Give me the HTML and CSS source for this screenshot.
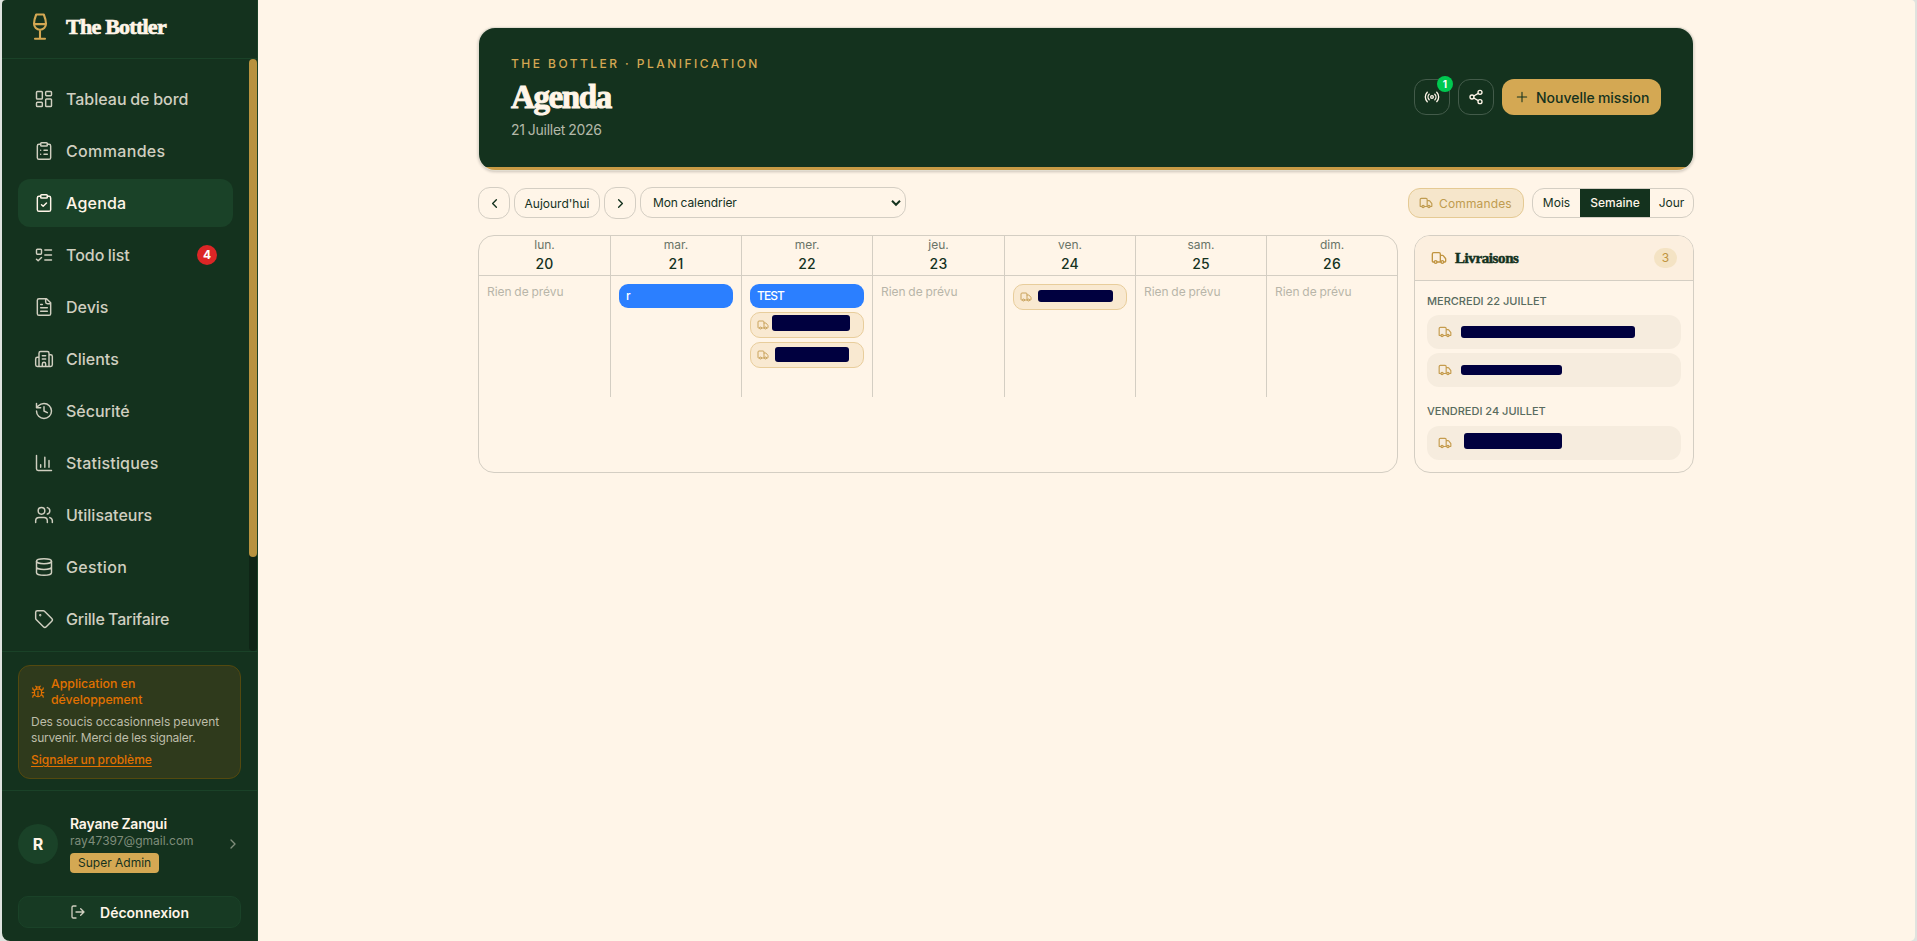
FILE: index.html
```html
<!DOCTYPE html>
<html lang="fr">
<head>
<meta charset="utf-8">
<title>The Bottler - Agenda</title>
<link rel="stylesheet" href="styles.css">
</head>
<body>
<svg class="defs" aria-hidden="true">
  <symbol id="truck" viewBox="0 0 24 24"><path d="M14 18V6a2 2 0 0 0-2-2H4a2 2 0 0 0-2 2v11a1 1 0 0 0 1 1h2M15 18H9M19 18h2a1 1 0 0 0 1-1v-3.65a1 1 0 0 0-.22-.624l-3.48-4.35A1 1 0 0 0 17.52 8H14"/><circle cx="17" cy="18" r="2"/><circle cx="7" cy="18" r="2"/></symbol>
</svg>
<div class="app">
  <aside class="sidebar">
    <div class="brand">
      <svg class="logo" viewBox="0 0 24 36"><path d="M8.2 6h7.600c1.200 3 2.200 6 2.200 9.200a6 6 0 0 1-12 0c0-3.200 1-6.200 2.200-9.200zM6 15.600h12M12 21.200v9M7 30.200h10"/></svg>
      <span class="brand-name">The Bottler</span>
    </div>
    <div class="nav-wrap">
      <nav class="nav">
        <a class="item"><svg viewBox="0 0 24 24"><rect width="7" height="9" x="3" y="3" rx="1"/><rect width="7" height="5" x="14" y="3" rx="1"/><rect width="7" height="9" x="14" y="12" rx="1"/><rect width="7" height="5" x="3" y="16" rx="1"/></svg><span class="t-tableau">Tableau de bord</span></a>
        <a class="item"><svg viewBox="0 0 24 24"><rect width="8" height="4" x="8" y="2" rx="1"/><path d="M16 4h2a2 2 0 0 1 2 2v14a2 2 0 0 1-2 2H6a2 2 0 0 1-2-2V6a2 2 0 0 1 2-2h2M12 11h4M12 16h4M8 11h.01M8 16h.01"/></svg><span class="t-wide">Commandes</span></a>
        <a class="item active"><svg viewBox="0 0 24 24"><rect width="8" height="4" x="8" y="2" rx="1"/><path d="M16 4h2a2 2 0 0 1 2 2v14a2 2 0 0 1-2 2H6a2 2 0 0 1-2-2V6a2 2 0 0 1 2-2h2M9 14l2 2 4-4"/></svg><span class="t-stats">Agenda</span></a>
        <a class="item"><svg viewBox="0 0 24 24"><rect x="3" y="5" width="6" height="6" rx="1"/><path d="m3 17 2 2 4-4M13 6h8M13 12h8M13 18h8"/></svg><span class="t-todo">Todo list</span><b class="count">4</b></a>
        <a class="item"><svg viewBox="0 0 24 24"><path d="M15 2H6a2 2 0 0 0-2 2v16a2 2 0 0 0 2 2h12a2 2 0 0 0 2-2V7ZM14 2v4a2 2 0 0 0 2 2h4M10 9H8M16 13H8M16 17H8"/></svg><span>Devis</span></a>
        <a class="item"><svg viewBox="0 0 24 24"><path d="M10 12h4M10 8h4M14 21v-3a2 2 0 0 0-4 0v3M6 10H4a2 2 0 0 0-2 2v7a2 2 0 0 0 2 2h16a2 2 0 0 0 2-2V9a2 2 0 0 0-2-2h-2M6 21V5a2 2 0 0 1 2-2h8a2 2 0 0 1 2 2v16"/></svg><span>Clients</span></a>
        <a class="item"><svg viewBox="0 0 24 24"><path d="M3 12a9 9 0 1 0 9-9 9.75 9.75 0 0 0-6.74 2.74L3 8M3 3v5h5M12 7v5l4 2"/></svg><span>Sécurité</span></a>
        <a class="item"><svg viewBox="0 0 24 24"><path d="M3 3v16a2 2 0 0 0 2 2h16M13 17V5M18 17V9M8 17v-3"/></svg><span class="t-stats">Statistiques</span></a>
        <a class="item"><svg viewBox="0 0 24 24"><path d="M16 21v-2a4 4 0 0 0-4-4H6a4 4 0 0 0-4 4v2M16 3.128a4 4 0 0 1 0 7.744M22 21v-2a4 4 0 0 0-3-3.87"/><circle cx="9" cy="7" r="4"/></svg><span>Utilisateurs</span></a>
        <a class="item"><svg viewBox="0 0 24 24"><ellipse cx="12" cy="5" rx="9" ry="3"/><path d="M3 5v14a9 3 0 0 0 18 0V5M3 12a9 3 0 0 0 18 0"/></svg><span class="t-wide">Gestion</span></a>
        <a class="item"><svg viewBox="0 0 24 24"><path d="M12.586 2.586A2 2 0 0 0 11.172 2H4a2 2 0 0 0-2 2v7.172a2 2 0 0 0 .586 1.414l8.704 8.704a2.426 2.426 0 0 0 3.42 0l6.58-6.58a2.426 2.426 0 0 0 0-3.42z"/><circle cx="7.5" cy="7.5" r=".5"/></svg><span class="t-grille">Grille Tarifaire</span></a>
      </nav>
      <div class="track"><div class="thumb"></div></div>
    </div>
    <div class="notice-wrap">
      <div class="notice">
        <div class="notice-title"><svg viewBox="0 0 24 24"><path d="m8 2 1.88 1.88M14.12 3.88 16 2M9 7.13v-1a3 3 0 1 1 6 0v1M12 20c-3.3 0-6-2.7-6-6v-3a4 4 0 0 1 4-4h4a4 4 0 0 1 4 4v3c0 3.3-2.7 6-6 6M12 20v-9M6.53 9C4.6 8.8 3 7.1 3 5M6 13H2M3 21c0-2.1 1.7-3.9 3.8-4M20.97 5c0 2.1-1.6 3.8-3.5 4M22 13h-4M17.2 17c2.1.1 3.8 1.9 3.8 4"/></svg><span>Application en<br>développement</span></div>
        <p>Des soucis occasionnels peuvent<br><span class="tight">survenir. Merci de les signaler.</span></p>
        <a>Signaler un problème</a>
      </div>
    </div>
    <div class="account">
      <div class="user">
        <div class="avatar">R</div>
        <div class="who"><strong>Rayane Zangui</strong><small>ray47397@gmail.com</small><em>Super Admin</em></div>
        <svg class="chev" viewBox="0 0 24 24"><path d="m9 18 6-6-6-6"/></svg>
      </div>
      <button class="logout"><svg viewBox="0 0 24 24"><path d="M9 21H5a2 2 0 0 1-2-2V5a2 2 0 0 1 2-2h4M16 17l5-5-5-5M21 12H9"/></svg><span>Déconnexion</span></button>
    </div>
  </aside>
  <main class="main">
    <div class="content">
      <header class="banner">
        <div>
          <div class="eyebrow">THE BOTTLER · PLANIFICATION</div>
          <h1>Agenda</h1>
          <div class="date">21 Juillet 2026</div>
        </div>
        <div class="actions">
          <button class="square"><svg viewBox="0 0 24 24"><path d="M4.9 19.1C1 15.2 1 8.8 4.9 4.9M7.8 16.2c-2.3-2.3-2.3-6.1 0-8.5M16.2 7.8c2.3 2.3 2.3 6.1 0 8.5M19.1 4.9C23 8.8 23 15.1 19.1 19"/><circle cx="12" cy="12" r="2"/></svg><b class="live">1</b></button>
          <button class="square"><svg viewBox="0 0 24 24"><circle cx="18" cy="5" r="3"/><circle cx="6" cy="12" r="3"/><circle cx="18" cy="19" r="3"/><path d="m8.59 13.51 6.83 3.98M15.41 6.51l-6.82 3.98"/></svg></button>
          <button class="primary"><svg viewBox="0 0 24 24"><path d="M5 12h14M12 5v14"/></svg><span>Nouvelle mission</span></button>
        </div>
      </header>
      <div class="toolbar">
        <button class="arrow"><svg viewBox="0 0 24 24"><path d="m15 18-6-6 6-6"/></svg></button>
        <button class="today">Aujourd'hui</button>
        <button class="arrow"><svg viewBox="0 0 24 24"><path d="m9 18 6-6-6-6"/></svg></button>
        <div class="select"><span>Mon calendrier</span><svg viewBox="0 0 10 8"><path d="m1 1.8 4 4 4-4"/></svg></div>
        <div class="right">
          <button class="orders"><svg><use href="#truck"/></svg><span>Commandes</span></button>
          <div class="segment"><span class="s1">Mois</span><span class="s2">Semaine</span><span class="s3">Jour</span></div>
        </div>
      </div>
      <div class="board">
        <section class="week">
          <div class="day"><div class="head"><span>lun.</span><b>20</b></div><div class="cell"><i>Rien de prévu</i></div></div>
          <div class="day"><div class="head"><span>mar.</span><b>21</b></div><div class="cell"><div class="event">r</div></div></div>
          <div class="day"><div class="head"><span>mer.</span><b>22</b></div><div class="cell"><div class="event">TEST</div><div class="order"><svg><use href="#truck"/></svg><span class="mask m1"></span></div><div class="order"><svg><use href="#truck"/></svg><span class="mask m2"></span></div></div></div>
          <div class="day wide"><div class="head"><span>jeu.</span><b>23</b></div><div class="cell"><i>Rien de prévu</i></div></div>
          <div class="day"><div class="head"><span>ven.</span><b>24</b></div><div class="cell"><div class="order"><svg><use href="#truck"/></svg><span class="mask m3"></span></div></div></div>
          <div class="day"><div class="head"><span>sam.</span><b>25</b></div><div class="cell"><i>Rien de prévu</i></div></div>
          <div class="day"><div class="head"><span>dim.</span><b>26</b></div><div class="cell"><i>Rien de prévu</i></div></div>
        </section>
        <section class="deliveries">
          <div class="d-head"><svg><use href="#truck"/></svg><h2>Livraisons</h2><b>3</b></div>
          <div class="d-body">
            <h3>MERCREDI 22 JUILLET</h3>
            <div class="row"><svg><use href="#truck"/></svg><span class="mask m4"></span></div>
            <div class="row"><svg><use href="#truck"/></svg><span class="mask m5"></span></div>
            <h3 class="next">VENDREDI 24 JUILLET</h3>
            <div class="row"><svg><use href="#truck"/></svg><span class="mask m6"></span></div>
          </div>
        </section>
      </div>
    </div>
  </main>
</div>
</body>
</html>
```
FILE: styles.css
```css
* { box-sizing: border-box; margin: 0; padding: 0; }
body {
  height: 941px;
  overflow: hidden;
  background: #dfe3df;
  color: #14321e;
  font-family: Inter, "Liberation Sans", sans-serif;
}
button { font: inherit; background: none; border: 0; color: inherit; }
svg { display: block; flex: none; fill: none; stroke: currentColor; stroke-width: 2; stroke-linecap: round; stroke-linejoin: round; }
.defs { position: absolute; width: 0; height: 0; }
.app { display: flex; height: 941px; margin: 0 2px; background: #fff5e8; border-radius: 4px 4px 5px 8px; overflow: hidden; }

/* Sidebar */
.sidebar { width: 256px; flex: none; display: flex; flex-direction: column; background: #14321e; color: #fff5e8; border-right: 1px solid #1a4228; }
.brand { height: 59px; flex: none; display: flex; align-items: center; padding: 0 0 5px 26px; border-bottom: 1px solid #1a4228; }
.logo { width: 24px; height: 36px; stroke: #d4a853; stroke-width: 2.1; transform: translateY(-.5px); }
.brand-name { margin-left: 14px; font: bold 22px "Liberation Serif", serif; letter-spacing: -.75px; -webkit-text-stroke: .7px #fff5e8; }
.nav-wrap { height: 592px; flex: none; display: flex; }
.nav { flex: 1; padding: 16px; display: flex; flex-direction: column; gap: 4px; overflow: hidden; }
.item { height: 48px; flex: none; display: flex; align-items: center; gap: 12px; padding: 0 16px; border-radius: 12px; color: #d0cfc0; font-size: 16px; font-weight: 500; }
.item svg { width: 20px; height: 20px; stroke-width: 1.75; }
.item.active { background: #1a4228; color: #fff5e8; }
.t-tableau { word-spacing: -.6px; }
.t-wide { letter-spacing: .35px; }
.t-todo { word-spacing: -1px; }
.t-stats { letter-spacing: .2px; }
.t-grille { letter-spacing: -.2px; word-spacing: -.6px; }
.count { margin-left: auto; width: 20px; height: 20px; border-radius: 10px; background: #dc2626; color: #fff; font-size: 12px; line-height: 20px; text-align: center; }
.track { width: 8px; background: #0f2516; border-radius: 4px; }
.thumb { height: 498px; border-radius: 4px; background: #b8923f; }
.notice-wrap { height: 139px; flex: none; padding: 13px 16px 12px; border-top: 1px solid #1a4228; }
.notice { width: 223px; height: 114px; padding: 10px 12px; border: 1px solid #54490f; border-radius: 12px; background: #2f3a1c; font-size: 12px; line-height: 16px; }
.notice-title { display: flex; align-items: center; gap: 6px; color: #e17100; font-size: 12.3px; font-weight: 500; }
.notice-title svg { width: 14px; height: 14px; }
.notice p { margin-top: 6px; color: #bdbda9; white-space: nowrap; letter-spacing: -.02px; word-spacing: -.2px; }
.tight { letter-spacing: -.2px; word-spacing: -.4px; }
.notice a { display: block; margin-top: 6px; color: #e17100; font-weight: 500; word-spacing: -.6px; text-decoration: underline; text-underline-offset: 2px; }
.account { flex: 1; padding: 25px 16px 0; border-top: 1px solid #1a4228; }
.user { display: flex; align-items: center; height: 56px; }
.avatar { width: 40px; height: 40px; border-radius: 20px; background: #1a4228; font-weight: 700; font-size: 16px; line-height: 40px; text-align: center; }
.who { margin-left: 12px; display: flex; flex-direction: column; align-items: flex-start; }
.who strong { font-size: 14px; line-height: 18px; font-weight: 600; letter-spacing: -.2px; word-spacing: -.6px; }
.who small { font-size: 12px; line-height: 16px; color: #7f8d7b; }
.who em { margin-top: 4px; padding: 0 8px; border-radius: 4px; background: #d4a853; color: #14321e; font-size: 12px; line-height: 20px; font-style: normal; }
.chev { width: 16px; height: 16px; margin-left: auto; color: #7f8d7b; }
.logout { width: 223px; height: 32px; margin-top: 24px; display: flex; align-items: center; justify-content: center; gap: 14px; border: 1px solid #1a4228; border-radius: 10px; background: #173a23; font-size: 14px; font-weight: 600; }
.logout svg { width: 16px; height: 16px; color: #d0cfc0; }

/* Main column */
.main { flex: 1; padding-top: 28px; }
.content { width: 1216px; margin: 0 auto 0 220px; }
.banner { width: 1214px; height: 142px; margin-left: 1px; padding: 0 32px; display: flex; align-items: flex-start; justify-content: space-between; border-radius: 16px; background: linear-gradient(#14321e 139px, #c89a45 139px); color: #fff5e8; box-shadow: 0 0 0 1px #e2ddd1, 0 1px 3px 1px rgba(0, 0, 0, .2); }
.eyebrow { margin-top: 28px; color: #d4a853; font-size: 12px; line-height: 16px; font-weight: 500; letter-spacing: 2.46px; }
h1 { margin-top: 6px; font: bold 33px/38px "Liberation Serif", serif; letter-spacing: -1.4px; -webkit-text-stroke: 1px #fff5e8; }
.date { margin-top: 4px; color: #b4b9a9; font-size: 14px; line-height: 20px; letter-spacing: -.25px; word-spacing: -.7px; }
.actions { margin-top: 51px; display: flex; gap: 8px; }
.square { position: relative; width: 36px; height: 36px; display: grid; place-items: center; border: 1px solid #435b4a; border-radius: 12px; }
.square svg { width: 16px; height: 16px; }
.live { position: absolute; right: -4px; top: -4px; width: 16px; height: 16px; border-radius: 8px; background: #00c950; color: #fff; font-size: 10px; line-height: 16px; text-align: center; }
.primary { width: 159px; height: 36px; display: flex; align-items: center; gap: 6px; padding-left: 12px; border-radius: 12px; background: #d4a853; color: #14321e; font-size: 14px; font-weight: 500; word-spacing: -.6px; white-space: nowrap; }
.primary svg { width: 16px; height: 16px; stroke-width: 1.6; }

.toolbar { height: 32px; margin-top: 17px; display: flex; align-items: center; gap: 4px; font-size: 12px; }
.arrow { width: 32px; height: 32px; display: grid; place-items: center; border: 1px solid #d4cec3; border-radius: 12px; }
.arrow svg { width: 15px; height: 15px; stroke-width: 2.2; }
.today { width: 86px; height: 30px; border: 1px solid #d4cec3; border-radius: 12px; }
.select { width: 266px; height: 31px; margin-top: -1px; padding: 0 4px 0 12px; display: flex; align-items: center; justify-content: space-between; border: 1px solid #d4cec3; border-radius: 12px; letter-spacing: -.1px; word-spacing: -.5px; }
.select svg { width: 10px; height: 8px; stroke-width: 2; stroke-linecap: butt; stroke-linejoin: miter; }
.right { margin-left: auto; display: flex; gap: 8px; }
.orders { width: 116px; height: 30px; display: flex; align-items: center; gap: 6px; padding-left: 10px; border: 1px solid #e5ca94; border-radius: 12px; background: #f6e6cb; color: #c09c50; letter-spacing: .15px; }
.orders svg { width: 14px; height: 14px; }
.segment { width: 162px; height: 30px; display: flex; border: 1px solid #d4cec3; border-radius: 12px; overflow: hidden; line-height: 28px; text-align: center; }
.s1 { width: 47px; }
.s2 { width: 70px; background: #14321e; color: #fff5e8; font-weight: 500; }
.s3 { flex: 1; }

/* Week grid */
.board { margin-top: 16px; display: flex; gap: 16px; height: 238px; }
.week { width: 920px; display: flex; border: 1px solid #d4cec3; border-radius: 16px; overflow: hidden; }
.day { width: 131px; flex: none; height: 161px; display: flex; flex-direction: column; }
.day:first-child, .day.wide { width: 132px; }
.day:last-child { width: 130px; }
.head { height: 40px; flex: none; display: flex; flex-direction: column; align-items: center; border-bottom: 1px solid #d4cec3; border-right: 1px solid #d4cec3; }
.cell { flex: 1; padding: 8px 8px 0; display: flex; flex-direction: column; gap: 4px; border-right: 1px solid #d4cec3; }
.day:last-child .head, .day:last-child .cell { border-right: 0; }
.head span { font-size: 12px; line-height: 16px; margin-top: 1px; color: #697467; }
.head b { margin-top: 1px; font-size: 14px; line-height: 20px; font-weight: 450; letter-spacing: .2px; }
.cell i { font-size: 12px; line-height: 16px; font-style: normal; color: #b8b5a9; letter-spacing: -.05px; word-spacing: -.5px; }
.event { height: 24px; padding-left: 7px; border-radius: 9px; background: #2b7fff; color: #fff; font-size: 12px; line-height: 23px; font-weight: 500; letter-spacing: -.9px; }
.order { height: 26px; display: flex; align-items: center; padding-left: 6px; border: 1px solid #e8cd9b; border-radius: 10px; background: #f9e9d1; color: #c9a35c; }
.order svg { width: 12px; height: 12px; }
.mask { background: #00003f; border-radius: 3px; }
.m1 { width: 78px; height: 16px; margin: -4px 0 0 3px; }
.m2 { width: 74px; height: 15px; margin: -1px 0 0 6px; }
.m3 { width: 75px; height: 12px; margin: -2px 0 0 6px; }
.m4 { width: 174px; height: 12px; margin: -1px 0 0 9px; }
.m5 { width: 101px; height: 10px; margin: -1px 0 0 9px; }
.m6 { width: 98px; height: 16px; margin: -4px 0 0 12px; }

/* Deliveries */
.deliveries { width: 280px; border: 1px solid #d4cec3; border-radius: 16px; overflow: hidden; }
.d-head { height: 45px; display: flex; align-items: center; padding: 0 16px; border-bottom: 1px solid #d4cec3; background: #fcefdf; color: #c09440; }
.d-head svg { width: 16px; height: 16px; }
.d-head h2 { margin-left: 8px; color: #14321e; font: bold 15px "Liberation Serif", serif; letter-spacing: -.4px; -webkit-text-stroke: .5px #14321e; }
.d-head b { margin-left: auto; width: 23px; height: 20px; border-radius: 10px; background: #f4e3c4; font-size: 12px; line-height: 20px; font-weight: 400; text-align: center; }
.d-body { padding: 12px; }
.d-body h3 { color: #586b5e; font-size: 11px; line-height: 16px; font-weight: 500; margin-bottom: 6px; }
.d-body h3.next { margin-top: 16px; margin-bottom: 7px; }
.row { height: 34px; display: flex; align-items: center; padding-left: 11px; border-radius: 12px; background: #f6ecde; color: #c59c4e; }
.row + .row { margin-top: 4px; }
.row svg { width: 14px; height: 14px; }
```
